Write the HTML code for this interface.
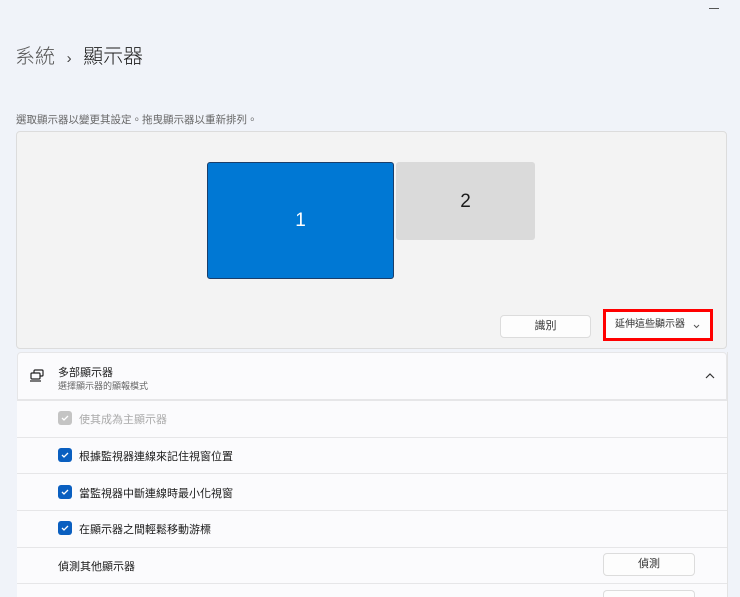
<!DOCTYPE html>
<html style="width:740px;height:597px;overflow:hidden"><head><meta charset="utf-8"><style>
body{margin:0;width:740px;height:597px;overflow:hidden;background:#f0f3f9;font-family:"Liberation Sans","Noto Sans CJK TC",sans-serif;position:relative;color:#1b1b1b}
.a{position:absolute}
.t{font-size:12px;white-space:nowrap}
.row{position:absolute;left:17px;width:710px;background:#fbfbfd;border-top:1px solid #e6e6e8}
.cb{position:absolute;left:58px;width:14px;height:14px;border-radius:3px;background:#0a5fc0}
.cb svg{position:absolute;left:2px;top:2px}
.btn{position:absolute;background:#fdfdfd;border:1px solid #dcdcdc;border-radius:4px;font-size:11px;text-align:center;color:#333;box-sizing:border-box}
</style></head><body>
<div class="a" style="left:709px;top:8px;width:10px;height:1px;background:#555"></div>
<div class="a" style="left:15px;top:40px;font-size:20px;color:#555;font-weight:300">系統 <span style="font-size:15px;margin:0 6px;color:#444">›</span> <span style="color:#1b1b1b">顯示器</span></div>
<div class="a t" style="left:16px;top:112px;font-size:10.5px;color:#666">選取顯示器以變更其設定。拖曳顯示器以重新排列。</div>
<div class="a" style="left:16px;top:131px;width:711px;height:218px;background:#f3f3f3;border:1px solid #dcdcdc;box-sizing:border-box;border-radius:4px"></div>
<div class="a" style="left:207px;top:162px;width:187px;height:117px;background:#0078d4;border:1px solid #1a3e6a;box-sizing:border-box;border-radius:3px;color:#fff;font-size:19px;text-align:center;line-height:115px">1</div>
<div class="a" style="left:396px;top:162px;width:139px;height:78px;background:#dadada;border-radius:3px;font-size:19px;text-align:center;line-height:80px">2</div>
<div class="btn" style="left:500px;top:315px;width:91px;height:23px;line-height:21px">識別</div>
<div class="a" style="left:603px;top:309px;width:110px;height:32px;border:3.5px solid #f00;box-sizing:border-box;background:#fdfdfd;font-size:10px;line-height:25px;padding-left:9px;color:#333;white-space:nowrap">延伸這些顯示器</div>
<svg class="a" style="left:693px;top:324px" width="7" height="5"><path d="M1 1l2.5 2.5L6 1" stroke="#555" fill="none" stroke-width="1"/></svg>
<div class="row" style="top:352px;height:48px;border:1px solid #e6e6e8;border-radius:4px 4px 0 0;box-sizing:border-box"></div>
<svg class="a" style="left:29px;top:369px" width="16" height="14" viewBox="0 0 16 14" fill="none" stroke="#222" stroke-width="1.2"><rect x="5" y="1" width="9" height="6" rx="1"/><rect x="2" y="4" width="9" height="6" rx="1" fill="#fbfbfd"/><path d="M1 12h11"/></svg>
<div class="a t" style="left:58px;top:364px;font-size:11px">多部顯示器</div>
<div class="a t" style="left:58px;top:379px;font-size:9px;color:#666">選擇顯示器的顯報模式</div>
<svg class="a" style="left:705px;top:372px" width="10" height="7"><path d="M1 6l4-4 4 4" stroke="#333" fill="none" stroke-width="1.2"/></svg>
<div class="row" style="top:400px;height:37px"></div>
<div class="cb" style="top:411px;background:#c4c4c4"><svg width="10" height="10"><path d="M2 5l2 2 4-4" stroke="#fff" fill="none" stroke-width="1.3"/></svg></div>
<div class="a t" style="left:79px;top:411px;font-size:11px;color:#aaa">使其成為主顯示器</div>
<div class="row" style="top:437px;height:36px"></div>
<div class="cb" style="top:448px"><svg width="10" height="10"><path d="M2 5l2 2 4-4" stroke="#fff" fill="none" stroke-width="1.3"/></svg></div>
<div class="a t" style="left:79px;top:448px;font-size:11px">根據監視器連線來記住視窗位置</div>
<div class="row" style="top:473px;height:37px"></div>
<div class="cb" style="top:485px"><svg width="10" height="10"><path d="M2 5l2 2 4-4" stroke="#fff" fill="none" stroke-width="1.3"/></svg></div>
<div class="a t" style="left:79px;top:485px;font-size:11px">當監視器中斷連線時最小化視窗</div>
<div class="row" style="top:510px;height:37px"></div>
<div class="cb" style="top:521px"><svg width="10" height="10"><path d="M2 5l2 2 4-4" stroke="#fff" fill="none" stroke-width="1.3"/></svg></div>
<div class="a t" style="left:79px;top:521px;font-size:11px">在顯示器之間輕鬆移動游標</div>
<div class="row" style="top:547px;height:36px"></div>
<div class="a t" style="left:58px;top:558px;font-size:11px">偵測其他顯示器</div>
<div class="btn" style="left:603px;top:553px;width:92px;height:23px;line-height:21px">偵測</div>
<div class="row" style="top:583px;height:14px"></div>
<div class="btn" style="left:603px;top:590px;width:92px;height:7px;border-bottom:none;border-radius:4px 4px 0 0"></div>
<div class="a" style="left:727px;top:352px;width:1px;height:245px;background:#e3e3e3"></div>
</body></html>
